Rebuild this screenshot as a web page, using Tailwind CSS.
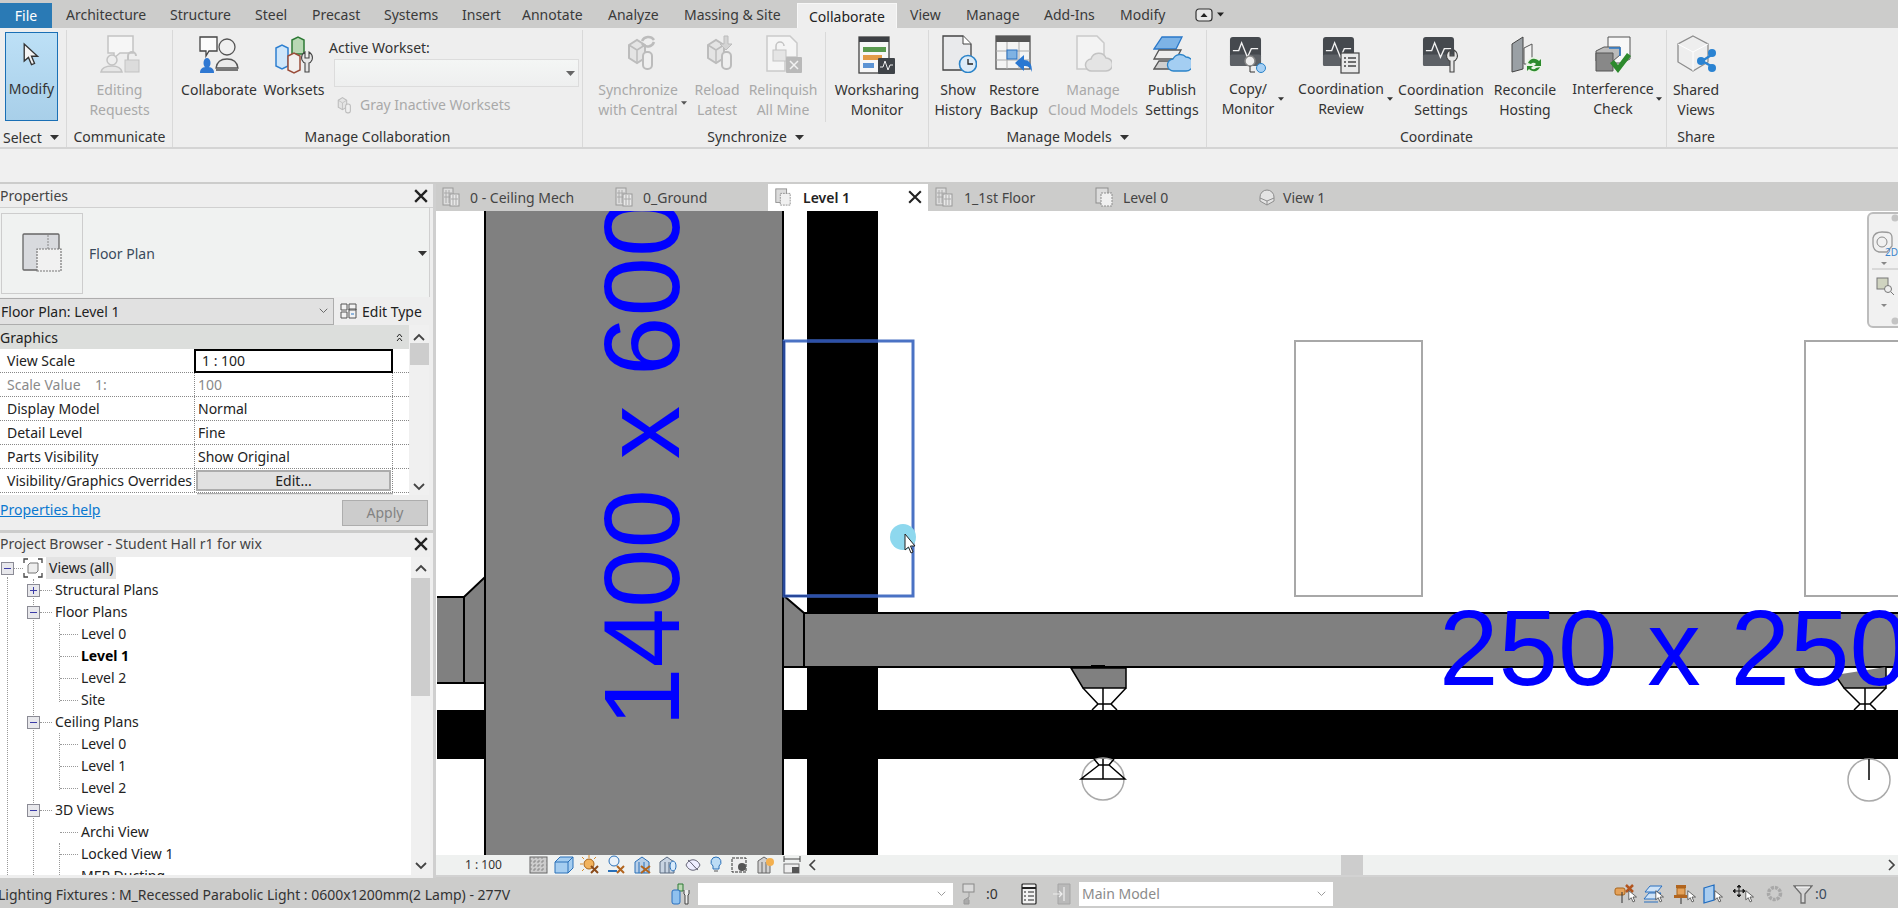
<!DOCTYPE html>
<html lang="en">
<head>
<meta charset="UTF-8">
<title>Revit - Collaborate</title>
<script src="https://cdn.jsdelivr.net/npm/@tailwindcss/browser@4"></script>
</head>
<body class="w-[1898px] h-[908px] overflow-hidden bg-[#cccccb] text-[14px] text-[#333] font-['Noto_Sans',sans-serif]">

<!-- shared icons -->
<svg class="hidden">
  <symbol id="cube-gray" viewBox="0 0 38 38"><path d="M10 10l8-5 8 5v13l-8 5-8-5z" fill="#e4e4e4" stroke="#bcbcbc" stroke-width="2"/><path d="M10 10l8 5 8-5M18 15v13" fill="none" stroke="#bcbcbc" stroke-width="1.500"/><rect x="24" y="17" width="9" height="17" rx="4" fill="#efefef" stroke="#bcbcbc" stroke-width="2"/></symbol>
  <symbol id="pulse" viewBox="0 0 34 34"><rect x="1" y="1" width="32" height="30" rx="3" fill="#45494e"/><rect x="1" y="19" width="32" height="12" rx="2" fill="#5d6166"/><path d="M4 15h6l3-8 6 15 4-9h7" fill="none" stroke="#f2f2f2" stroke-width="1.400"/></symbol>
  <symbol id="plan-tab" viewBox="0 0 20 20"><rect x="2" y="1" width="12" height="15" fill="#dcdcdc" stroke="#8d8d8d"/><rect x="7" y="6" width="11" height="13" fill="#f0f0f0" stroke="#8d8d8d" stroke-dasharray="2 1"/></symbol>
  <symbol id="grid-tab" viewBox="0 0 20 20"><rect x="2" y="1" width="10" height="17" fill="#ddd" stroke="#999"/><path d="M5 3v13M8 3v13M3 6h8M3 10h8" stroke="#aaa"/><rect x="9" y="7" width="9" height="12" fill="#e8e8e8" stroke="#999"/><path d="M12 8v10M15 8v10M10 12h7" stroke="#aaa"/></symbol>
  <symbol id="box-minus" viewBox="0 0 13 13"><rect x=".5" y=".5" width="12" height="12" fill="#e8e8ec" stroke="#8b8b95"/><path d="M3 6.500h7" stroke="#3d3da8"/></symbol>
  <symbol id="box-plus" viewBox="0 0 13 13"><rect x=".5" y=".5" width="12" height="12" fill="#e8e8ec" stroke="#8b8b95"/><path d="M3 6.500h7M6.500 3v7" stroke="#3d3da8"/></symbol>
  <symbol id="tri" viewBox="0 0 9 5"><path d="M0 0h9L4.500 5z" fill="currentColor"/></symbol>
  <symbol id="chev" viewBox="0 0 12 8"><path d="M1 7l5-5 5 5" fill="none" stroke="#444" stroke-width="1.800"/></symbol>
  <symbol id="pick" viewBox="0 0 14 20"><path d="M1 1v13l3.500-3 2.500 6 2.500-1-2.500-6h5z" fill="#fff" stroke="#333"/></symbol>
</svg>

<!-- tab row -->
<nav class="h-[28px] flex items-end text-[#3a3a3a]">
  <div class="w-[52px] h-[25px] bg-[#2a7ab5] text-white flex items-center justify-center mt-[3px]">File</div>
  <div class="flex h-[28px] items-center pt-[1px]">
    <div class="w-[104px] pl-[14px]">Architecture</div>
    <div class="w-[85px] pl-[14px]">Structure</div>
    <div class="w-[57px] pl-[14px]">Steel</div>
    <div class="w-[72px] pl-[14px]">Precast</div>
    <div class="w-[78px] pl-[14px]">Systems</div>
    <div class="w-[60px] pl-[14px]">Insert</div>
    <div class="w-[86px] pl-[14px]">Annotate</div>
    <div class="w-[76px] pl-[14px]">Analyze</div>
    <div class="w-[127px] pl-[14px] whitespace-nowrap">Massing &amp; Site</div>
    <div class="w-[100px] h-[25px] mt-[2px] pl-[11px] bg-[#eeeeee] border border-b-0 border-[#f7f7f7] text-[#222] flex items-center">Collaborate</div>
    <div class="w-[56px] pl-[13px]">View</div>
    <div class="w-[78px] pl-[13px]">Manage</div>
    <div class="w-[76px] pl-[13px]">Add-Ins</div>
    <div class="w-[88px] pl-[13px]">Modify</div>
    <svg class="w-[18px] h-[14px]" viewBox="0 0 18 14"><rect x="1" y="1" width="16" height="12" rx="3" fill="#e8e8e8" stroke="#333" stroke-width="1.200"/><path d="M5.500 9l3.500-4 3.500 4z" fill="#222"/></svg>
    <svg class="w-[7px] h-[5px] ml-[4px] text-[#222]"><use href="#tri"/></svg>
  </div>
</nav>

<!-- ribbon -->
<section class="h-[121px] bg-[#eeeeee] border-b-2 border-[#d4d4d4] flex pt-[2px]">

  <!-- Select -->
  <div class="w-[67px] h-[117px] border-r border-[#d9d9d9] flex flex-col">
    <div class="ml-[5px] mt-[2px] w-[53px] h-[89px] border border-[#1a6fb5] bg-gradient-to-b from-[#bde0f6] to-[#a8cfe9] flex flex-col items-center">
      <svg class="mt-[9px] w-[17px] h-[26px]" viewBox="0 0 14 20"><path d="M1 1v14l3.500-3 2.500 6 2.500-1-2.500-6h5z" fill="#f4f4f4" stroke="#333" stroke-width="1.100"/></svg>
      <span class="mt-[11px] leading-[20px]">Modify</span>
    </div>
    <div class="flex items-center h-[20px] mt-[6px] pl-[3px]">Select<svg class="w-[9px] h-[5px] ml-[8px] text-[#333]"><use href="#tri"/></svg></div>
  </div>

  <!-- Communicate -->
  <div class="w-[106px] h-[117px] border-r border-[#d9d9d9] flex flex-col">
    <div class="h-[93px] flex flex-col items-center text-[#a9a9a9] text-center leading-[20px]">
      <svg class="mt-[5px] w-[40px] h-[38px]" viewBox="0 0 40 38"><path d="M8 1h25v17H20l-6 5v-5H8z" fill="#f6f6f6" stroke="#c3c3c3" stroke-width="1.500"/><circle cx="12" cy="25" r="5" fill="#eee" stroke="#c3c3c3" stroke-width="1.500"/><path d="M1 37c1-5 5-6 11-6s9 2 10 6z" fill="#e6e6e6" stroke="#c3c3c3" stroke-width="1.500"/><rect x="25" y="25" width="14" height="12" fill="#dcdcdc" stroke="#c3c3c3"/><path d="M28 25v-4a4 4 0 018 0" fill="none" stroke="#c3c3c3" stroke-width="2"/></svg>
      <span class="mt-[7px]">Editing<br>Requests</span>
    </div>
    <div class="h-[20px] leading-[20px] mt-[4px] text-center whitespace-nowrap">Communicate</div>
  </div>

  <!-- Manage Collaboration -->
  <div class="w-[410px] h-[117px] border-r border-[#d9d9d9] flex flex-col">
    <div class="h-[93px] flex">
      <div class="w-[92px] flex flex-col items-center leading-[20px]">
        <svg class="mt-[6px] w-[40px] h-[38px]" viewBox="0 0 40 38"><path d="M1 1h17v14h-8l-3 5v-5H1z" fill="#fbfbfb" stroke="#444" stroke-width="1.300"/><circle cx="28" cy="11" r="8" fill="#f0f0f0" stroke="#555" stroke-width="1.300"/><path d="M17 32c1-7 5-9 11-9s10 2 11 9z" fill="#eaeaea" stroke="#555" stroke-width="1.300"/><path d="M17 34h22" stroke="#777" stroke-width="2"/><ellipse cx="8" cy="27" rx="3.500" ry="5" fill="#2f78d2"/><path d="M1 37c0-5 3-6 7-6s7 1 7 6z" fill="#2f78d2"/></svg>
        <span class="mt-[6px]">Collaborate</span>
      </div>
      <div class="w-[58px] flex flex-col items-center leading-[20px]">
        <svg class="mt-[6px] w-[40px] h-[38px]" viewBox="0 0 40 38"><path d="M18 4l6-3 6 3v14H18z" fill="#b8d8b4" stroke="#2d7a35" stroke-width="1.500"/><path d="M2 12l6-3 6 3v18l-6 3-6-3z" fill="#cfe6fa" stroke="#2e7fd0" stroke-width="1.500"/><path d="M14 20l6-3 6 3v14l-6 3-6-3z" fill="#f2f0ee" stroke="#9a4d3a" stroke-width="1.500"/><path d="M31 16v6h4v-6c3 2 4 5 3 8-1 2-2 3-3 3v9h-4v-9c-1 0-2-1-3-3-1-3 0-6 3-8z" fill="#e6e6e6" stroke="#444" stroke-width="1.100"/></svg>
        <span class="mt-[6px]">Worksets</span>
      </div>
      <div class="flex flex-col pl-[6px]">
        <div class="mt-[8px] leading-[20px]">Active Workset:</div>
        <div class="ml-[5px] mt-[1px] w-[245px] h-[28px] bg-gradient-to-b from-[#f4f6f5] to-[#eeefef] border border-[#dcdcdc] flex items-center justify-end pr-[3px] text-[#666]">
          <svg class="w-[9px] h-[5px]"><use href="#tri"/></svg>
        </div>
        <div class="mt-[8px] ml-[4px] flex items-center text-[#a9a9a9] leading-[20px]">
          <svg class="w-[20px] h-[20px] mr-[7px]"><use href="#cube-gray"/></svg>Gray Inactive Worksets
        </div>
      </div>
    </div>
    <div class="h-[20px] leading-[20px] mt-[4px] text-center">Manage Collaboration</div>
  </div>

  <!-- Synchronize -->
  <div class="w-[346px] h-[117px] border-r border-[#d9d9d9] flex flex-col">
    <div class="h-[93px] flex">
      <div class="w-[110px] relative flex flex-col items-center text-[#a9a9a9] leading-[20px] text-center">
        <svg class="mt-[5px] w-[38px] h-[38px]" viewBox="0 0 38 38"><use href="#cube-gray"/><path d="M23 6a7 7 0 0112-1M35 7a7 7 0 01-12 2" fill="none" stroke="#bcbcbc" stroke-width="2.500"/></svg>
        <span class="mt-[7px]">Synchronize<br>with Central</span>
        <svg class="absolute left-[98px] top-[71px] w-[6px] h-[4px] text-[#555]"><use href="#tri"/></svg>
      </div>
      <div class="w-[48px] flex flex-col items-center text-[#a9a9a9] leading-[20px] text-center">
        <svg class="mt-[5px] w-[38px] h-[38px]" viewBox="0 0 38 38"><use href="#cube-gray"/><path d="M26 1v8h-4l6 6 6-6h-4V1z" fill="#d4d4d4" stroke="#bcbcbc"/></svg>
        <span class="mt-[7px]">Reload<br>Latest</span>
      </div>
      <div class="w-[84px] flex flex-col items-center text-[#a9a9a9] leading-[20px] text-center">
        <svg class="mt-[5px] w-[38px] h-[38px]" viewBox="0 0 38 38"><path d="M3 1h23l7 7v14H21v14H3z" fill="#f5f5f5" stroke="#cacaca" stroke-width="1.500"/><rect x="9" y="15" width="13" height="11" fill="#e5e5e5" stroke="#c3c3c3"/><path d="M12 15v-4a4 4 0 018 0" fill="none" stroke="#c3c3c3" stroke-width="1.500"/><rect x="22" y="22" width="16" height="16" rx="1" fill="#b9b9b9"/><path d="M26 26l8 8M34 26l-8 8" stroke="#f2f2f2" stroke-width="1.500"/></svg>
        <span class="mt-[7px]">Relinquish<br>All Mine</span>
      </div>
      <div class="w-px h-[90px] mt-[2px] bg-[#d9d9d9]"></div>
      <div class="w-[102px] flex flex-col items-center leading-[20px] text-center">
        <svg class="mt-[6px] w-[38px] h-[38px]" viewBox="0 0 38 38"><rect x="1" y="1" width="30" height="36" fill="#f7f7f7" stroke="#444" stroke-width="1.300"/><rect x="1" y="1" width="30" height="5" fill="#3c3f44"/><rect x="5" y="11" width="23" height="5" fill="#5a9a4f"/><rect x="5" y="19" width="19" height="5" fill="#e39b47"/><rect x="5" y="27" width="11" height="5" fill="#5c93d3"/><rect x="20" y="22" width="17" height="16" rx="1" fill="#3f4348"/><path d="M22 31h3l2-6 3 9 2-5h3" fill="none" stroke="#eee"/></svg>
        <span class="mt-[6px]">Worksharing<br>Monitor</span>
      </div>
    </div>
    <div class="h-[20px] leading-[20px] mt-[4px] flex items-center justify-center">Synchronize<svg class="w-[9px] h-[5px] ml-[8px] text-[#333]"><use href="#tri"/></svg></div>
  </div>

  <!-- Manage Models -->
  <div class="w-[278px] h-[117px] border-r border-[#d9d9d9] flex flex-col">
    <div class="h-[93px] flex">
      <div class="w-[58px] flex flex-col items-center leading-[20px] text-center">
        <svg class="mt-[5px] w-[38px] h-[38px]" viewBox="0 0 38 38"><path d="M4 1h20l8 8v26H4z" fill="#e9eaec" stroke="#444" stroke-width="1.300"/><path d="M24 1v8h8" fill="#fff" stroke="#444"/><circle cx="29" cy="29" r="8.500" fill="#dcebf7" stroke="#2a83c9" stroke-width="1.600"/><path d="M29 24v5h5" fill="none" stroke="#222" stroke-width="1.300"/></svg>
        <span class="mt-[7px]">Show<br>History</span>
      </div>
      <div class="w-[54px] flex flex-col items-center leading-[20px] text-center">
        <svg class="mt-[5px] w-[38px] h-[38px]" viewBox="0 0 38 38"><rect x="1" y="1" width="34" height="33" fill="#f4f4f4" stroke="#555" stroke-width="1.300"/><rect x="1" y="1" width="34" height="6" fill="#555"/><path d="M1 16h34M1 25h34M12 7v27M24 7v27" stroke="#aaa"/><rect x="12" y="15" width="10" height="9" fill="#7fb2e3" stroke="#2a70c0"/><path d="M20 28l9-8v5c5 0 8 3 8 12-2-5-4-6-8-6v5z" fill="#2a78d2"/></svg>
        <span class="mt-[7px]">Restore<br>Backup</span>
      </div>
      <div class="w-[104px] flex flex-col items-center text-[#a9a9a9] leading-[20px] text-center">
        <svg class="mt-[5px] w-[38px] h-[38px]" viewBox="0 0 38 38"><path d="M3 1h20l7 7v26H3z" fill="#f3f3f3" stroke="#cacaca" stroke-width="1.500"/><path d="M18 36a6 6 0 01-1-12 8 8 0 0115-1 6.500 6.500 0 010 13z" fill="#e4e4e4" stroke="#c3c3c3" stroke-width="1.500"/></svg>
        <span class="mt-[7px] whitespace-nowrap">Manage<br>Cloud Models</span>
      </div>
      <div class="w-[54px] flex flex-col items-center leading-[20px] text-center">
        <svg class="mt-[5px] w-[38px] h-[38px]" viewBox="0 0 38 38"><path d="M9 2h20l-6 12H1z" fill="#7db3e6" stroke="#2a78c9" stroke-width="1.300"/><path d="M6 15h22l-5 9H1z" fill="#ededed" stroke="#555" stroke-width="1.300"/><path d="M6 26h14l-3 8H1z" fill="#cfcfcf" stroke="#555" stroke-width="1.300"/><path d="M21 36a6 6 0 01-1-12 8 8 0 0113-2 7 7 0 010 14z" fill="#a4cef2" stroke="#2a83c9" stroke-width="1.300"/></svg>
        <span class="mt-[7px]">Publish<br>Settings</span>
      </div>
    </div>
    <div class="h-[20px] leading-[20px] mt-[4px] flex items-center justify-center">Manage Models<svg class="w-[9px] h-[5px] ml-[8px] text-[#333]"><use href="#tri"/></svg></div>
  </div>

  <!-- Coordinate -->
  <div class="w-[460px] h-[117px] border-r border-[#d9d9d9] flex flex-col">
    <div class="h-[93px] flex">
      <div class="w-[82px] relative flex flex-col items-center leading-[20px] text-center">
        <svg class="mt-[6px] w-[38px] h-[38px]" viewBox="0 0 38 38"><use href="#pulse" width="33" height="33"/><circle cx="21" cy="25" r="5" fill="#eee" stroke="#888" stroke-width="1.500"/><path d="M21 30v6h5" fill="none" stroke="#333"/><circle cx="32" cy="32" r="4.500" fill="#a7d0f4" stroke="#2a83c9"/></svg>
        <span class="mt-[5px]">Copy/<br>Monitor</span>
        <svg class="absolute left-[71px] top-[67px] w-[6px] h-[4px] text-[#333]"><use href="#tri"/></svg>
      </div>
      <div class="w-[104px] relative flex flex-col items-center leading-[20px] text-center">
        <svg class="mt-[6px] w-[38px] h-[38px]" viewBox="0 0 38 38"><use href="#pulse" width="33" height="33"/><rect x="19" y="17" width="18" height="20" fill="#e9e9e9" stroke="#444" stroke-width="1.200"/><path d="M22 22h2m2 0h8M22 26h2m2 0h8M22 30h2m2 0h8" stroke="#444" stroke-width="1.300"/></svg>
        <span class="mt-[5px]">Coordination<br>Review</span>
        <svg class="absolute left-[98px] top-[67px] w-[6px] h-[4px] text-[#333]"><use href="#tri"/></svg>
      </div>
      <div class="w-[96px] flex flex-col items-center leading-[20px] text-center">
        <svg class="mt-[6px] w-[38px] h-[38px]" viewBox="0 0 38 38"><use href="#pulse" width="33" height="33"/><path d="M28 14v6h4v-6c3 2 4 5 3 8-1 2-2 3-3 3v11h-4V25c-1 0-2-1-3-3-1-3 0-6 3-8z" fill="#e6e6e6" stroke="#444" stroke-width="1.100"/></svg>
        <span class="mt-[6px] whitespace-nowrap">Coordination<br>Settings</span>
      </div>
      <div class="w-[72px] flex flex-col items-center leading-[20px] text-center">
        <svg class="mt-[6px] w-[38px] h-[38px]" viewBox="0 0 38 38"><path d="M6 8l11-7v32l-11 3z" fill="#9aa0a5" stroke="#444"/><path d="M18 12l8-4v20h-8z" fill="#f2f2f2" stroke="#555"/><circle cx="28" cy="29" r="8" fill="#e9f3e5"/><path d="M22 27a6.500 6.500 0 0111-2l2-2v7h-7l2-2a3 3 0 00-5 0zM34 31a6.500 6.500 0 01-11 2l-2 2v-5h6l-2 2a3 3 0 005 0z" fill="#2d8b2d"/></svg>
        <span class="mt-[6px]">Reconcile<br>Hosting</span>
      </div>
      <div class="w-[104px] relative flex flex-col items-center leading-[20px] text-center">
        <svg class="mt-[6px] w-[38px] h-[38px]" viewBox="0 0 38 38"><path d="M14 1h22v22l-8 4H14z" fill="#f8f8f8" stroke="#555"/><path d="M2 15l8-4h16v8l-7 6H2z" fill="#bbb" stroke="#555"/><path d="M2 17h17v18H2z" fill="#888" stroke="#555"/><path d="M15 12h11v8" fill="none" stroke="#2a78c9" stroke-width="1.500"/><path d="M16 27l4-3 4 5 9-12 4 3-13 17z" fill="#2d8a2d"/></svg>
        <span class="mt-[5px]">Interference<br>Check</span>
        <svg class="absolute left-[95px] top-[67px] w-[6px] h-[4px] text-[#333]"><use href="#tri"/></svg>
      </div>
    </div>
    <div class="h-[20px] leading-[20px] mt-[4px] text-center">Coordinate</div>
  </div>

  <!-- Share -->
  <div class="w-[58px] h-[117px] flex flex-col">
    <div class="h-[93px] flex flex-col items-center leading-[20px] text-center">
      <svg class="mt-[5px] w-[40px] h-[38px]" viewBox="0 0 40 38"><path d="M17 1l15 8v18l-15 9-15-9V9z" fill="#eeeeee" stroke="#8d8d8d" stroke-width="1.300"/><path d="M2 9l15 8 15-8M17 17v19" fill="none" stroke="#fff" stroke-width="1"/><path d="M26 26l11-7M26 26l11 6" stroke="#2a83d2" stroke-width="2.500"/><circle cx="25" cy="26" r="4" fill="#2a83d2"/><circle cx="36" cy="18" r="4" fill="#2a83d2"/><circle cx="36" cy="33" r="4" fill="#2a83d2"/></svg>
      <span class="mt-[7px]">Shared<br>Views</span>
    </div>
    <div class="h-[20px] leading-[20px] mt-[4px] text-center">Share</div>
  </div>
</section>

<!-- options bar -->
<div class="h-[33px] bg-[#f0f0f0]"></div>

<main class="h-[696px] flex">

  <!-- left dock -->
  <aside class="w-[433px] h-[694px] flex flex-col mt-[2px]">

    <!-- properties -->
    <section class="h-[346px] bg-[#eeeeee] flex flex-col">
      <header class="h-[24px] flex items-center justify-between pr-[5px] border-b border-[#d0d0d0] text-[#444]">
        <span>Properties</span>
        <svg class="w-[14px] h-[14px]" viewBox="0 0 12 12"><path d="M1 1l10 10M11 1L1 11" stroke="#222" stroke-width="2"/></svg>
      </header>
      <div class="h-[89px] flex items-center border-r border-[#d0d0d0] bg-[#f0f2f1] mr-[3px] pt-[1px]">
        <div class="ml-[1px] w-[82px] h-[81px] border border-[#cdcdcd] flex items-center justify-center">
          <svg class="w-[40px] h-[40px]" viewBox="0 0 40 40"><rect x="1" y="1" width="36" height="36" rx="1" fill="#d8dade" stroke="#666" stroke-width="1.300"/><rect x="15" y="16" width="24" height="22" fill="#f1f1f1"/><path d="M15 38V16h24v22z" fill="none" stroke="#777" stroke-width="1.200" stroke-dasharray="2 1"/><path d="M26 2v14" stroke="#888" stroke-dasharray="2 1"/></svg>
        </div>
        <span class="ml-[6px] text-[#3a4a5c]">Floor Plan</span>
        <svg class="w-[9px] h-[5px] ml-auto mr-[2px] text-[#333]"><use href="#tri"/></svg>
      </div>
      <div class="h-[28px] flex items-center">
        <div class="w-[334px] h-[27px] bg-[#e1e1e1] border border-l-0 border-[#adadad] flex items-center justify-between pl-[1px] pr-[5px] text-[#222]">
          <span>Floor Plan: Level 1</span>
          <svg class="w-[9px] h-[6px]" viewBox="0 0 12 8"><path d="M1 1l5 5 5-5" fill="none" stroke="#666" stroke-width="1.300"/></svg>
        </div>
        <svg class="ml-[6px] w-[17px] h-[16px]" viewBox="0 0 17 16"><path d="M1 1h6v6H1zM9 1h7v6H9zM1 9h6v6H1zM9 6h7v9H9z" fill="#f2f2f2" stroke="#555"/><path d="M11 11h3" stroke="#2a78c9"/></svg>
        <span class="ml-[5px] text-[#222]">Edit Type</span>
      </div>
      <div class="h-[170px] flex">
        <div class="w-[409px] h-[170px] overflow-hidden">
          <div class="h-[24px] bg-[#dcdedc] flex items-center justify-between pr-[6px] text-[#222]"><span>Graphics</span>
            <svg class="w-[7px] h-[9px]" viewBox="0 0 7 9"><path d="M1 4l2.500-3L6 4M1 8l2.500-3L6 8" fill="none" stroke="#222"/></svg>
          </div>
          <div class="bg-white text-[#222] leading-[23px]">
            <div class="grid grid-cols-[195px_198px_16px] h-[24px] border-b border-dotted border-[#888]"><div class="pl-[7px] border-r border-dotted border-[#888]">View Scale</div><div class="border-2 border-black -ml-px pl-[6px] h-[24px] leading-[20px]">1 : 100</div><div></div></div>
            <div class="grid grid-cols-[195px_198px_16px] h-[24px] border-b border-dotted border-[#888] text-[#8a8a8a]"><div class="pl-[7px] border-r border-dotted border-[#888] whitespace-pre">Scale Value    1:</div><div class="pl-[3px] border-r border-dotted border-[#888]">100</div><div></div></div>
            <div class="grid grid-cols-[195px_198px_16px] h-[24px] border-b border-dotted border-[#888]"><div class="pl-[7px] border-r border-dotted border-[#888]">Display Model</div><div class="pl-[3px] border-r border-dotted border-[#888]">Normal</div><div></div></div>
            <div class="grid grid-cols-[195px_198px_16px] h-[24px] border-b border-dotted border-[#888]"><div class="pl-[7px] border-r border-dotted border-[#888]">Detail Level</div><div class="pl-[3px] border-r border-dotted border-[#888]">Fine</div><div></div></div>
            <div class="grid grid-cols-[195px_198px_16px] h-[24px] border-b border-dotted border-[#888]"><div class="pl-[7px] border-r border-dotted border-[#888]">Parts Visibility</div><div class="pl-[3px] border-r border-dotted border-[#888]">Show Original</div><div></div></div>
            <div class="grid grid-cols-[195px_198px_16px] h-[24px] border-b border-dotted border-[#888]"><div class="pl-[7px] border-r border-dotted border-[#888] whitespace-nowrap">Visibility/Graphics Overrides</div><div class="px-[1px] py-[1px] border-r border-dotted border-[#888]"><div class="h-[21px] bg-[#e1e1e1] border-2 border-[#acacac] text-center leading-[18px]">Edit...</div></div><div></div></div>
            <div class="h-[4px] ml-[197px] w-[196px] bg-[#e1e1e1] border-t border-[#acacac]"></div>
          </div>
        </div>
        <div class="w-[20px] h-[170px] flex flex-col items-center bg-[#f0f0f0]">
          <svg class="mt-[8px] w-[12px] h-[8px]"><use href="#chev"/></svg>
          <div class="mt-[2px] w-[19px] h-[22px] bg-[#cdcdcd]"></div>
          <svg class="mt-auto mb-[4px] w-[12px] h-[8px] rotate-180"><use href="#chev"/></svg>
        </div>
      </div>
      <div class="h-[35px] flex items-center justify-between pr-[5px]">
        <span class="text-[#0a78d0] underline mb-[6px]">Properties help</span>
        <div class="w-[86px] h-[26px] bg-[#cccccc] border border-[#adadad] text-[#838383] flex items-center justify-center">Apply</div>
      </div>
    </section>

    <div class="h-[3px]"></div>

    <!-- project browser -->
    <section class="h-[345px] bg-[#eeeeee] flex flex-col">
      <header class="h-[24px] flex items-start justify-between pr-[5px] text-[#444] leading-[22px]">
        <span class="whitespace-nowrap">Project Browser - Student Hall r1 for wix</span>
        <svg class="mt-[4px] w-[14px] h-[14px]" viewBox="0 0 12 12"><path d="M1 1l10 10M11 1L1 11" stroke="#222" stroke-width="2"/></svg>
      </header>
      <div class="h-[318px] flex">
        <div class="w-[411px] h-[318px] bg-white relative overflow-hidden text-[#222] leading-[22px]">
          <!-- tree guide lines -->
          <div class="absolute left-[7px] top-[20px] h-[300px] border-l border-dotted border-[#999]"></div>
          <div class="absolute left-[33px] top-[22px] h-[300px] border-l border-dotted border-[#999]"></div>
          <div class="absolute left-[59px] top-[66px] h-[79px] border-l border-dotted border-[#999]"></div>
          <div class="absolute left-[59px] top-[176px] h-[57px] border-l border-dotted border-[#999]"></div>
          <div class="absolute left-[59px] top-[286px] h-[40px] border-l border-dotted border-[#999]"></div>

          <div class="h-[22px] flex items-center relative"><svg class="ml-[1px] w-[13px] h-[13px]"><use href="#box-minus"/></svg><span class="w-[9px] border-t border-dotted border-[#999]"></span>
            <svg class="w-[20px] h-[20px]" viewBox="0 0 20 20"><path d="M1 5V1h4M15 1h4v4M19 15v4h-4M5 19H1v-4" fill="none" stroke="#444" stroke-width="1.300"/><path d="M5 7l2-2h8v8l-2 2H5z" fill="#eee" stroke="#777"/></svg>
            <span class="ml-[3px] px-[3px] bg-[#e3e3e3] h-[22px]">Views (all)</span></div>
          <div class="h-[22px] flex items-center relative pl-[27px]"><svg class="w-[13px] h-[13px]"><use href="#box-plus"/></svg><span class="w-[12px] mr-[3px] border-t border-dotted border-[#999]"></span>Structural Plans</div>
          <div class="h-[22px] flex items-center relative pl-[27px]"><svg class="w-[13px] h-[13px]"><use href="#box-minus"/></svg><span class="w-[12px] mr-[3px] border-t border-dotted border-[#999]"></span>Floor Plans</div>
          <div class="h-[22px] flex items-center pl-[60px]"><span class="w-[18px] mr-[3px] border-t border-dotted border-[#999]"></span>Level 0</div>
          <div class="h-[22px] flex items-center pl-[60px] font-bold text-black"><span class="w-[18px] mr-[3px] border-t border-dotted border-[#999]"></span>Level 1</div>
          <div class="h-[22px] flex items-center pl-[60px]"><span class="w-[18px] mr-[3px] border-t border-dotted border-[#999]"></span>Level 2</div>
          <div class="h-[22px] flex items-center pl-[60px]"><span class="w-[18px] mr-[3px] border-t border-dotted border-[#999]"></span>Site</div>
          <div class="h-[22px] flex items-center relative pl-[27px]"><svg class="w-[13px] h-[13px]"><use href="#box-minus"/></svg><span class="w-[12px] mr-[3px] border-t border-dotted border-[#999]"></span>Ceiling Plans</div>
          <div class="h-[22px] flex items-center pl-[60px]"><span class="w-[18px] mr-[3px] border-t border-dotted border-[#999]"></span>Level 0</div>
          <div class="h-[22px] flex items-center pl-[60px]"><span class="w-[18px] mr-[3px] border-t border-dotted border-[#999]"></span>Level 1</div>
          <div class="h-[22px] flex items-center pl-[60px]"><span class="w-[18px] mr-[3px] border-t border-dotted border-[#999]"></span>Level 2</div>
          <div class="h-[22px] flex items-center relative pl-[27px]"><svg class="w-[13px] h-[13px]"><use href="#box-minus"/></svg><span class="w-[12px] mr-[3px] border-t border-dotted border-[#999]"></span>3D Views</div>
          <div class="h-[22px] flex items-center pl-[60px]"><span class="w-[18px] mr-[3px] border-t border-dotted border-[#999]"></span>Archi View</div>
          <div class="h-[22px] flex items-center pl-[60px]"><span class="w-[18px] mr-[3px] border-t border-dotted border-[#999]"></span>Locked View 1</div>
          <div class="h-[22px] flex items-center pl-[60px]"><span class="w-[18px] mr-[3px] border-t border-dotted border-[#999]"></span>MEP Ducting</div>
        </div>
        <div class="w-[19px] h-[318px] bg-[#f0f0f0] flex flex-col items-center">
          <svg class="mt-[7px] w-[12px] h-[8px]"><use href="#chev"/></svg>
          <div class="mt-[6px] w-[19px] h-[118px] bg-[#cdcdcd]"></div>
          <svg class="mt-auto mb-[5px] w-[12px] h-[8px] rotate-180"><use href="#chev"/></svg>
        </div>
      </div>
    </section>
  </aside>

  <!-- splitter -->
  <div class="w-[3px] h-[694px] mt-[2px] bg-[#cfcfcf]"></div>

  <!-- view area -->
  <div class="w-[1462px] mt-[2px] flex flex-col">
    <!-- view tabs -->
    <div class="h-[27px] flex text-[#444]">
      <div class="w-[173px] flex items-center pl-[5px] pb-[1px]"><svg class="w-[20px] h-[20px] mr-[9px]"><use href="#grid-tab"/></svg>0 - Ceiling Mech</div>
      <div class="w-[159px] flex items-center pl-[5px] pb-[1px]"><svg class="w-[20px] h-[20px] mr-[9px]"><use href="#grid-tab"/></svg>0_Ground</div>
      <div class="w-[160px] flex items-center pl-[6px] pb-[1px] bg-white text-[#222]"><svg class="w-[18px] h-[20px] mr-[11px]"><use href="#plan-tab"/></svg><span class="font-semibold">Level 1</span>
        <svg class="ml-auto mr-[6px] w-[14px] h-[14px]" viewBox="0 0 12 12"><path d="M1 1l10 10M11 1L1 11" stroke="#222" stroke-width="1.800"/></svg></div>
      <div class="w-[161px] flex items-center pl-[6px] pb-[1px]"><svg class="w-[20px] h-[20px] mr-[10px]"><use href="#grid-tab"/></svg>1_1st Floor</div>
      <div class="w-[163px] flex items-center pl-[5px] pb-[1px]"><svg class="w-[20px] h-[20px] mr-[9px]"><use href="#plan-tab"/></svg>Level 0</div>
      <div class="flex items-center pl-[5px] pb-[1px]"><svg class="w-[20px] h-[18px] mr-[6px]" viewBox="0 0 20 18"><path d="M3 9a7 7 0 0114 0v4l-7 4-7-4z" fill="#e4e4e4" stroke="#8d8d8d"/><path d="M3 10l7 3 7-3M10 13v4" fill="none" stroke="#8d8d8d"/></svg>View 1</div>
    </div>

    <!-- drawing canvas -->
    <div class="relative h-[644px] bg-white overflow-hidden">
      <svg class="block w-[1462px] h-[644px]" viewBox="436 211 1462 644">
        <rect x="437" y="211" width="1461" height="644" fill="#fff"/>
        <rect x="807" y="205" width="71" height="660" fill="#000"/>
        <rect x="437" y="710" width="1461" height="49" fill="#000"/>

        <rect x="1295" y="341" width="127" height="255" fill="#fff" stroke="#a8a8a8" stroke-width="2"/>
        <rect x="1805" y="341" width="120" height="255" fill="#fff" stroke="#a8a8a8" stroke-width="2"/>

        <!-- ducts -->
        <path d="M437 597H464L485 577V683H437" fill="#808080" stroke="#000" stroke-width="2"/>
        <path d="M464 597V683" stroke="#000" stroke-width="2"/>
        <path d="M783 595L804 613V667H783Z" fill="#808080" stroke="#000" stroke-width="2"/>
        <rect x="804" y="613" width="1110" height="54" fill="#808080" stroke="#000" stroke-width="2"/>
        <rect x="485" y="200" width="298" height="670" fill="#808080" stroke="#000" stroke-width="2"/>

        <!-- fixture 1 -->
        <path d="M1071 668L1083 688H1126V668Z" fill="#808080" stroke="#000" stroke-width="1.500"/>
        <path d="M1091 666H1105" stroke="#000" stroke-width="2"/>
        <path d="M1083 688L1098 704L1092 710M1126 688L1111 704L1117 710M1098 704H1111M1103 688V710" fill="none" stroke="#000" stroke-width="1.500"/>
        <circle cx="1103" cy="779" r="21" fill="none" stroke="#aaa" stroke-width="1.500"/>
        <path d="M1094 759L1099 765L1081 779H1125L1109 765L1114 759M1099 765H1109M1103 759V779" fill="none" stroke="#000" stroke-width="1.500"/>

        <!-- fixture 2 -->
        <path d="M1835 675L1844 688H1886V667" fill="#808080" stroke="#000" stroke-width="1.500"/>
        <path d="M1844 688L1860 704L1854 710M1886 688L1870 704L1876 710M1860 704H1870M1865 688V710" fill="none" stroke="#000" stroke-width="1.500"/>
        <circle cx="1869" cy="780" r="21" fill="none" stroke="#aaa" stroke-width="1.500"/>
        <path d="M1869 759V780" stroke="#000" stroke-width="1.500"/>

        <!-- highlighted element -->
        <rect x="784" y="341" width="129" height="255" fill="none" stroke="#4a72c4" stroke-width="3"/>
        <path d="M784 341V596H807" fill="none" stroke="#1c3a8a" stroke-width="1.500"/>
        <path d="M807 341H878M807 596H878" stroke="#2d50a8" stroke-width="3"/>

        <!-- duct tags -->
        <text transform="translate(679 727) rotate(-90)" font-family="'Liberation Sans',Arial,sans-serif" font-size="107" fill="#0000ff">1400 x 600</text>
        <text x="1439" y="685" font-family="'Liberation Sans',Arial,sans-serif" font-size="107" fill="#0000ff">250 x 250</text>

        <!-- mouse pointer -->
        <circle cx="903" cy="537" r="13" fill="#8ed8ee"/>
        <path d="M905 534v16l3.500-3 2.500 6 2-1-2.500-6h4.500z" fill="#fff" stroke="#222"/>
      </svg>

      <!-- navigation bar -->
      <svg class="absolute left-[1431px] top-[1px] w-[31px] h-[116px]" viewBox="1867 212 31 116">
        <rect x="1868" y="213" width="40" height="114" rx="5" fill="#f1f1f1" stroke="#bdbdbd" stroke-width="2"/>
        <circle cx="1895" cy="218" r="3.500" fill="#c4c4c4"/>
        <path d="M1882 232c6 0 10 0 10 6v8l-5 6h-8c-4-1-6-3-6-8v-6c1-4 4-6 9-6z" fill="none" stroke="#9a9a9a" stroke-width="1.300"/>
        <circle cx="1882" cy="242" r="5" fill="none" stroke="#8a8a8a"/>
        <text x="1885" y="256" font-family="'Noto Sans',sans-serif" font-size="10" fill="#3d85cc">2D</text>
        <path d="M1881 262h6l-3 3z" fill="#888"/>
        <path d="M1872 269h26" stroke="#c0c0c0"/>
        <rect x="1877" y="278" width="11" height="11" fill="#cfd3c0" stroke="#777"/>
        <circle cx="1888" cy="289" r="3.500" fill="#eee" stroke="#777"/>
        <path d="M1891 292l3 3" stroke="#777"/>
        <path d="M1881 304h6l-3 3z" fill="#888"/>
        <circle cx="1895" cy="321" r="3.500" fill="#c4c4c4"/>
      </svg>
    </div>

    <!-- view control bar -->
    <div class="h-[22px] bg-[#eff1f0] border-b-2 border-[#d2d2d2] flex items-center text-[#333]">
      <span class="w-[93px] pl-[29px] text-[12px] whitespace-nowrap">1 : 100</span>
      <div class="w-[273px] flex items-center gap-[6px]">
        <svg class="w-[19px] h-[18px]" viewBox="0 0 19 18"><rect x="1" y="1" width="17" height="16" fill="#ccc" stroke="#666"/><path d="M1 5h17M1 9h17M1 13h17M5 1v16M9 1v16M13 1v16" stroke="#888" stroke-dasharray="2 2"/></svg>
        <svg class="w-[20px] h-[18px]" viewBox="0 0 20 18"><path d="M1 6l5-5h13v11l-5 5H1z" fill="#a5cdf0" stroke="#2a70b8"/><path d="M1 6h13v11M14 6l5-5" fill="none" stroke="#2a70b8"/></svg>
        <svg class="w-[20px] h-[20px]" viewBox="0 0 20 20"><circle cx="9" cy="9" r="5" fill="#f2b35d" stroke="#a9651a"/><path d="M9 0v3M0 9h3M2 2l2 2M16 2l-2 2M2 16l2-2" stroke="#d88a2a"/><path d="M11 11l7 7M18 11l-7 7" stroke="#8a4a1a" stroke-width="2"/></svg>
        <svg class="w-[20px] h-[20px]" viewBox="0 0 20 20"><circle cx="8" cy="6" r="5" fill="#eaf2fa" stroke="#2a70b8"/><path d="M2 16h9" stroke="#2a70b8" stroke-width="2"/><path d="M11 11l7 7M18 11l-7 7" stroke="#b2651f" stroke-width="2"/></svg>
        <svg class="w-[20px] h-[20px]" viewBox="0 0 20 20"><path d="M3 18V7l7-5 7 5v11z" fill="#b8cfe8" stroke="#2a70b8"/><path d="M7 7v11M12 7v11" stroke="#2a70b8"/><path d="M9 11l9 7M18 11l-9 7" stroke="#b2651f" stroke-width="2"/></svg>
        <svg class="w-[20px] h-[20px]" viewBox="0 0 20 20"><path d="M2 18V7l7-5 7 5v11z" fill="#c8d4e2" stroke="#5a6a80"/><path d="M7 7v11M11 7v11" stroke="#5a6a80"/><ellipse cx="15" cy="11" rx="3" ry="5" fill="#d8ebfb" stroke="#2a70b8"/></svg>
        <svg class="w-[18px] h-[18px]" viewBox="0 0 18 18"><path d="M2 9c3-7 11-7 14 0-3 7-11 7-14 0z" fill="#eef" stroke="#667"/><path d="M4 4c3 2 7 8 10 10" stroke="#667"/></svg>
        <svg class="w-[16px] h-[18px]" viewBox="0 0 16 18"><path d="M8 1a5 5 0 00-3 9v3h6v-3a5 5 0 00-3-9z" fill="#bcdcf5" stroke="#2a70b8"/><path d="M6 15h4" stroke="#555"/></svg>
        <svg class="w-[20px] h-[18px]" viewBox="0 0 20 18"><rect x="2" y="2" width="14" height="14" fill="#eee" stroke="#333" stroke-dasharray="3 1"/><circle cx="12" cy="11" r="4" fill="#555"/></svg>
        <svg class="w-[20px] h-[20px]" viewBox="0 0 20 20"><path d="M2 18V6l6-4 6 4v12z" fill="#d0d0d0" stroke="#666"/><path d="M6 7v11M10 7v11" stroke="#666"/><circle cx="14" cy="7" r="4" fill="#f3b04f"/></svg>
        <svg class="w-[20px] h-[20px]" viewBox="0 0 20 20"><path d="M2 4h16M2 1v6M18 1v6" stroke="#444"/><rect x="2" y="9" width="15" height="9" fill="#eee" stroke="#777"/><rect x="10" y="12" width="7" height="6" fill="#555"/></svg>
      </div>
      <svg class="ml-[6px] w-[8px] h-[12px]" viewBox="0 0 8 12"><path d="M7 1L2 6l5 5" fill="none" stroke="#444" stroke-width="1.700"/></svg>
      <div class="ml-[525px] w-[22px] h-[20px] bg-[#cdcdcd]"></div>
      <svg class="ml-auto mr-[2px] w-[8px] h-[12px]" viewBox="0 0 8 12"><path d="M1 1l5 5-5 5" fill="none" stroke="#444" stroke-width="1.700"/></svg>
    </div>
  </div>
</main>

<!-- status bar -->
<footer class="h-[30px] flex items-center -ml-[2px] pt-[1px] text-[#333]">
  <div class="w-[673px] whitespace-nowrap pt-[2px]">Lighting Fixtures : M_Recessed Parabolic Light : 0600x1200mm(2 Lamp) - 277V</div>
  <svg class="w-[21px] h-[22px]" viewBox="0 0 21 22"><path d="M7 1h5v7H7z" fill="#bcd8b4" stroke="#2d7a35"/><rect x="1" y="7" width="8" height="14" rx="2" fill="#8fc1ef" stroke="#2a70c0"/><path d="M13 7v4l1 1v9h3v-9l1-1V7" fill="#eee" stroke="#444"/></svg>
  <div class="ml-[6px] w-[255px] h-[22px] bg-white flex items-center justify-end pr-[7px]"><svg class="w-[9px] h-[6px]" viewBox="0 0 12 8"><path d="M1 1l5 5 5-5" fill="none" stroke="#999" stroke-width="1.300"/></svg></div>
  <svg class="ml-[8px] w-[14px] h-[22px]" viewBox="0 0 14 22"><rect x="2" y="1" width="11" height="8" fill="#dadada" stroke="#888"/><path d="M8 9v5L3 17v4h5v-4" fill="#aaa" stroke="#999"/></svg>
  <span class="w-[46px] pl-[11px]">:0</span>
  <svg class="w-[16px] h-[22px]" viewBox="0 0 16 22"><rect x="1" y="1" width="14" height="20" rx="1" fill="#f2f2f2" stroke="#222" stroke-width="1.200"/><path d="M1 5h14" stroke="#222" stroke-width="2"/><path d="M3 9h2m2 0h6M3 13h2m2 0h6M3 17h2m2 0h6" stroke="#222"/></svg>
  <svg class="ml-[15px] w-[20px] h-[22px]" viewBox="0 0 20 22"><path d="M6 1h12v20H6z" fill="#b9b9b9" stroke="#a5a5a5"/><path d="M1 11h9m-3-3l3 3-3 3M12 4v14" fill="none" stroke="#eee" stroke-width="1.200"/></svg>
  <div class="ml-[7px] w-[254px] h-[24px] bg-white flex items-center justify-between pl-[3px] pr-[7px] text-[#8b8b8b]">Main Model<svg class="w-[9px] h-[6px]" viewBox="0 0 12 8"><path d="M1 1l5 5 5-5" fill="none" stroke="#999" stroke-width="1.300"/></svg></div>

  <div class="ml-[281px] flex items-center">
    <svg class="w-[20px] h-[20px]" viewBox="0 0 20 20"><rect x="1" y="4" width="10" height="7" rx="2" fill="#e5a25a" stroke="#a9651a"/><path d="M12 1l7 7M19 1l-7 7" stroke="#b2551f" stroke-width="2.500"/><path d="M8 8v11" stroke="#333"/></svg>
    <svg class="w-[10px] h-[14px] -ml-[6px] mt-[6px]" viewBox="0 0 14 20"><use href="#pick"/></svg>
    <svg class="ml-[5px] w-[20px] h-[20px]" viewBox="0 0 20 20"><path d="M7 2h12l-5 6H2zM6 9h12l-5 6H1z" fill="#cfe3f7" stroke="#2a70c0"/><path d="M1 18h14" stroke="#2a70c0"/></svg>
    <svg class="w-[10px] h-[14px] -ml-[8px] mt-[6px]" viewBox="0 0 14 20"><use href="#pick"/></svg>
    <svg class="ml-[8px] w-[16px] h-[20px]" viewBox="0 0 16 20"><rect x="3" y="1" width="10" height="3" fill="#b2651f"/><rect x="4" y="4" width="8" height="7" fill="#e5a25a" stroke="#a9651a"/><rect x="1" y="11" width="13" height="3" fill="#b2651f"/><path d="M8 14v6" stroke="#333"/></svg>
    <svg class="w-[10px] h-[14px] -ml-[2px] mt-[6px]" viewBox="0 0 14 20"><use href="#pick"/></svg>
    <svg class="ml-[6px] w-[12px] h-[20px]" viewBox="0 0 12 20"><path d="M1 4l10-3v15L1 19z" fill="#a9cdf0" stroke="#1f6cc0" stroke-width="1.300"/></svg>
    <svg class="w-[10px] h-[14px] -ml-[1px] mt-[6px]" viewBox="0 0 14 20"><use href="#pick"/></svg>
    <svg class="ml-[9px] w-[12px] h-[14px] -mt-[6px]" viewBox="0 0 12 12"><path d="M6 0v12M0 6h12M6 0L4 2h4zM6 12l-2-2h4zM0 6l2-2v4zM12 6l-2-2v4z" stroke="#222"/></svg>
    <svg class="w-[10px] h-[14px] mt-[6px]" viewBox="0 0 14 20"><use href="#pick"/></svg>
    <svg class="ml-[11px] w-[17px] h-[17px]" viewBox="0 0 17 17"><circle cx="8.500" cy="8.500" r="6" fill="none" stroke="#a8a8a8" stroke-width="3.500" stroke-dasharray="3 1"/></svg>
    <svg class="ml-[10px] w-[20px] h-[20px]" viewBox="0 0 20 20"><path d="M1 2h18l-7 8v9H8v-9z" fill="#d6d6d6" stroke="#6d6d6d" stroke-width="1.300"/><path d="M3 3h14" stroke="#fff"/></svg>
    <span class="ml-[2px] text-[#3a4a5c]">:0</span>
  </div>
</footer>
</body>
</html>
